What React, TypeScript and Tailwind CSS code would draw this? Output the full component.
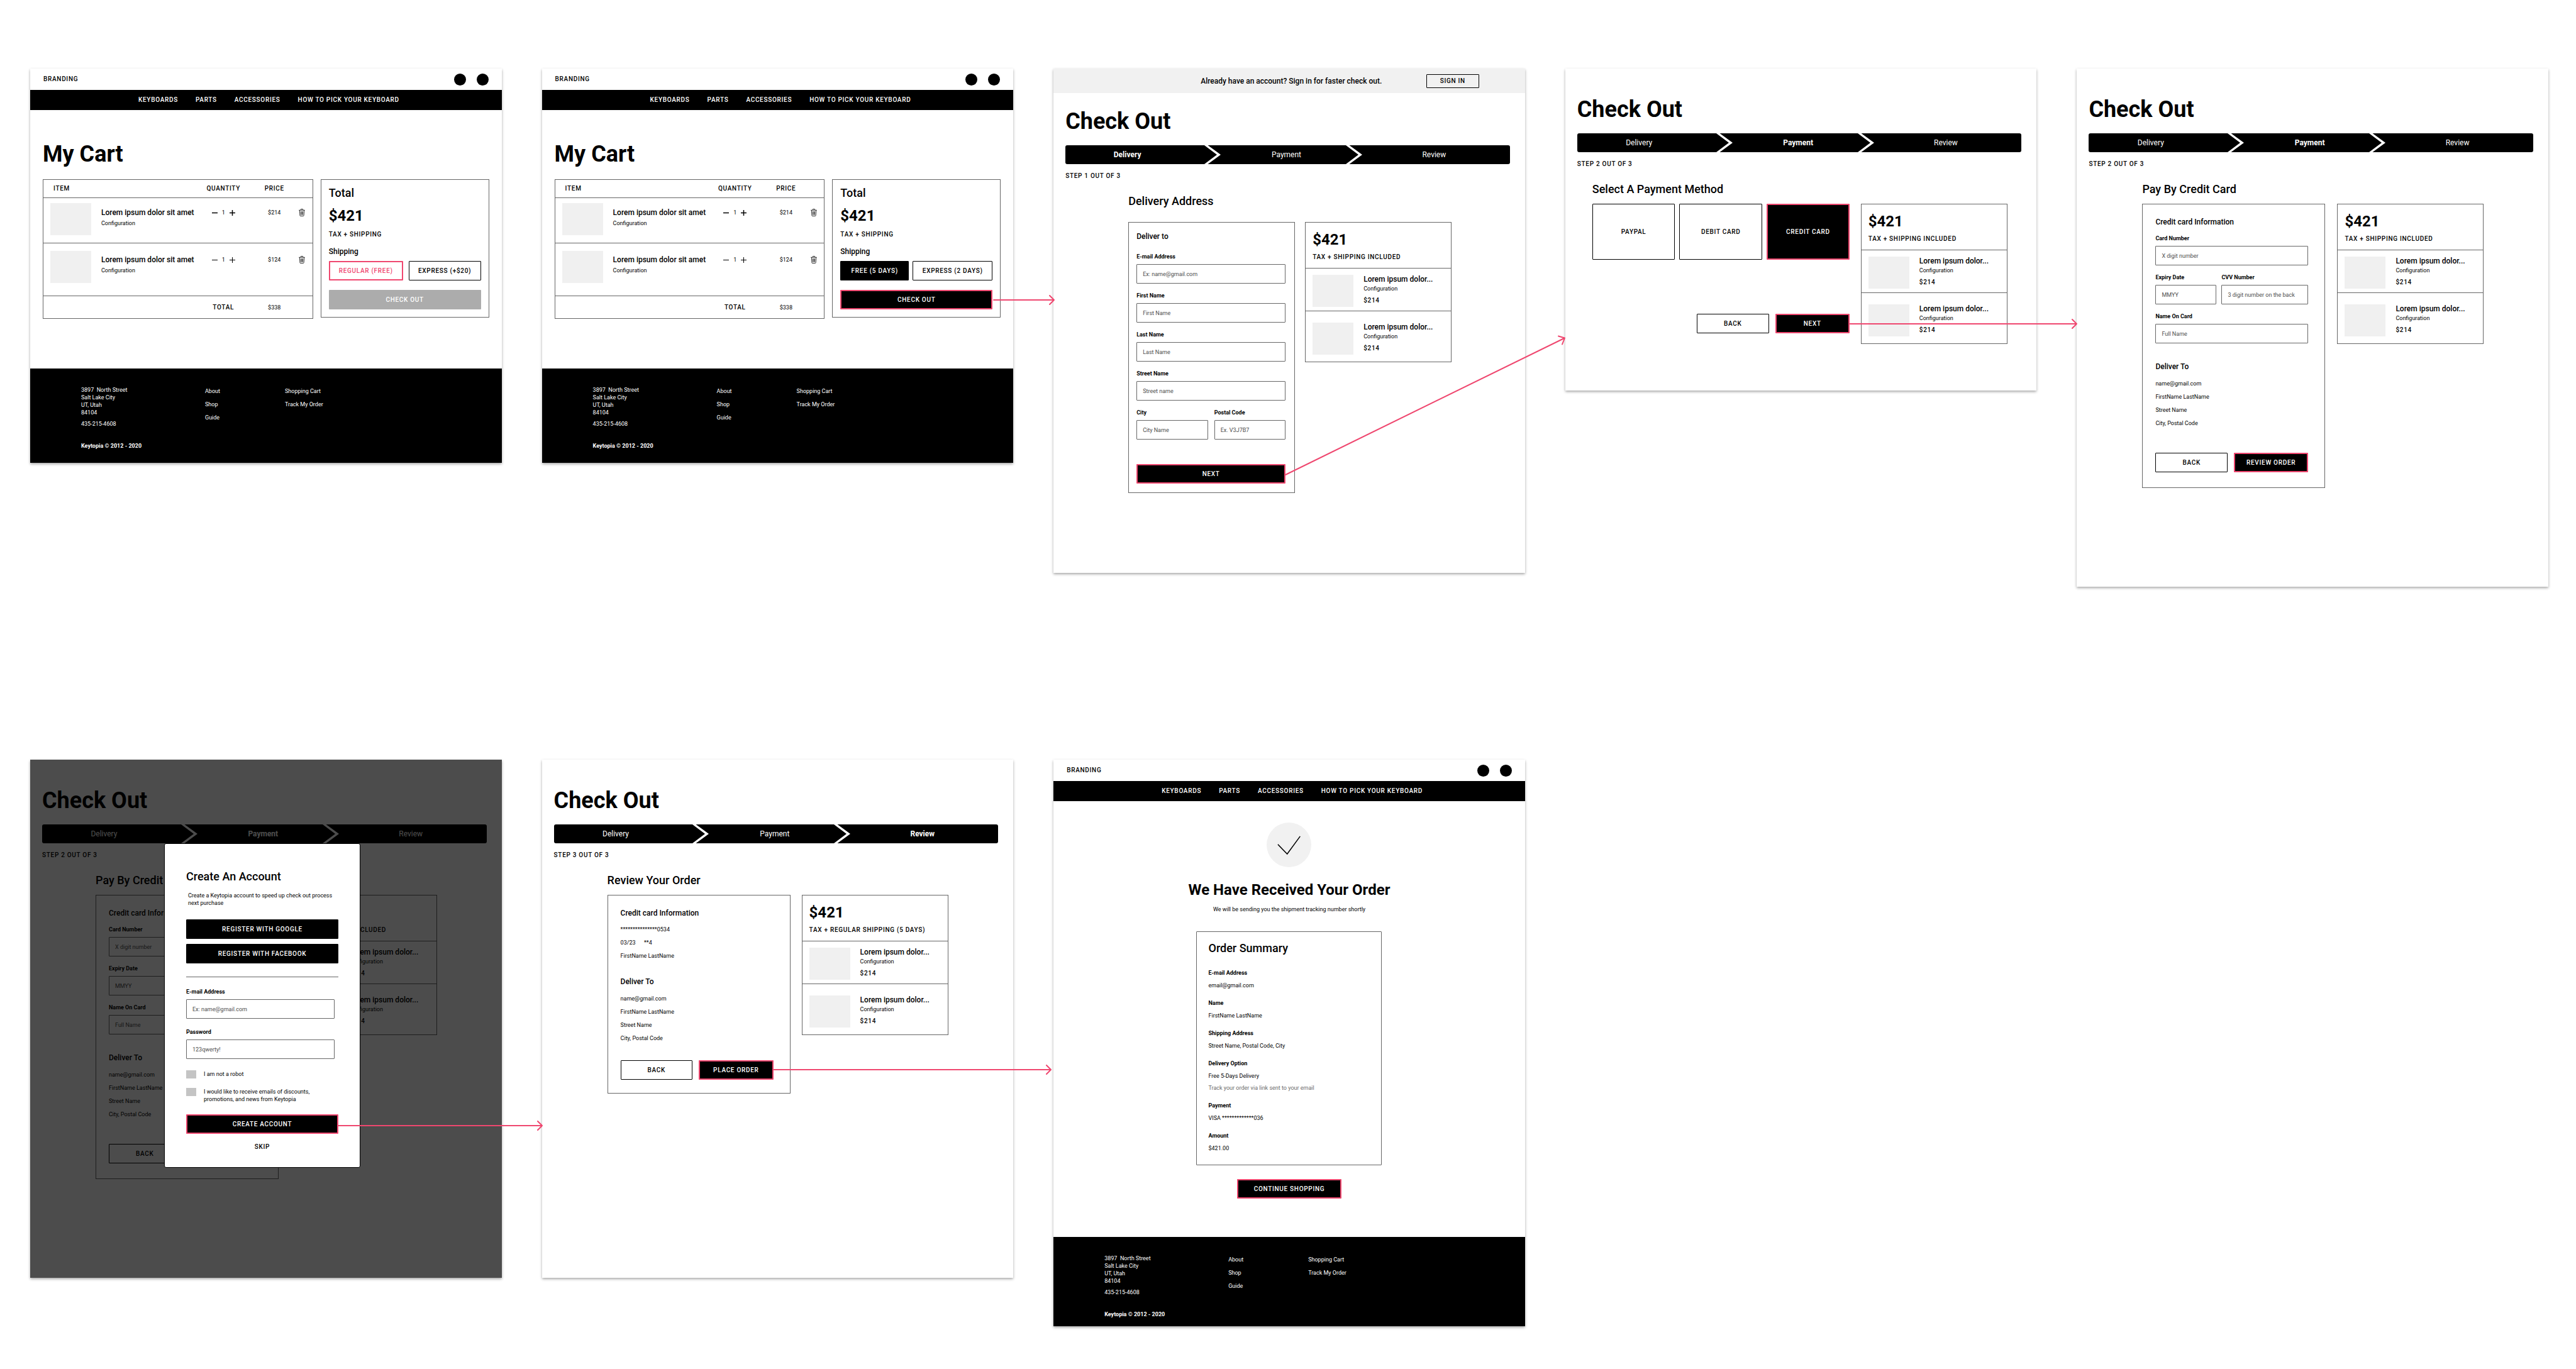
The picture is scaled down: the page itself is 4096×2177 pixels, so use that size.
import React, { useId } from "react";

const caps = "text-[10px] leading-3 font-medium tracking-[0.07em]";

/* ---------- shared pieces ---------- */

type Variant = "outline" | "ghost" | "solid" | "solidPink" | "pink" | "disabled";

const variants: Record<Variant, string> = {
  outline: "border border-black bg-white text-black",
  ghost: "border border-black bg-transparent text-black",
  solid: "border border-black bg-black text-white",
  solidPink: "border-2 border-[#ef476f] bg-black text-white",
  pink: "border-2 border-[#ef476f] bg-white text-[#ef476f]",
  disabled: "bg-[#acacac] text-white",
};

function Btn({
  children,
  variant = "outline",
  size = "h-[31px]",
}: {
  children: React.ReactNode;
  variant?: Variant;
  size?: string;
}) {
  return (
    <button
      type="button"
      disabled={variant === "disabled"}
      className={`flex items-center justify-center rounded-[1px] whitespace-nowrap ${caps} ${variants[variant]} ${size}`}
    >
      {children}
    </button>
  );
}

function Field({
  label,
  placeholder,
  type = "text",
  size = "w-full",
}: {
  label: string;
  placeholder: string;
  type?: string;
  size?: string;
}) {
  const id = useId();
  return (
    <div className={`flex flex-col gap-1.5 ${size}`}>
      <label htmlFor={id} className="text-[9px] leading-3 font-bold">
        {label}
      </label>
      <input
        id={id}
        type={type}
        placeholder={placeholder}
        className="h-[31px] w-full rounded-[1px] border border-[#666] bg-transparent px-[9px] text-[9px] text-black placeholder:text-[#4d4d4d] placeholder:opacity-100"
      />
    </div>
  );
}

function Frame({ children, bottom = "" }: { children: React.ReactNode; bottom?: string }) {
  return (
    <section className={`relative bg-white shadow-[0_2px_4px_rgba(0,0,0,0.35)] ${bottom}`}>
      {children}
    </section>
  );
}

/* ---------- shop header and footer ---------- */

function SiteHeader() {
  return (
    <header>
      <div className="flex h-[34px] items-center justify-between px-[21px]">
        <a href="#" className={caps}>
          BRANDING
        </a>
        <div className="flex gap-[17px]">
          <button type="button" aria-label="Account" className="size-[19px] rounded-full bg-black" />
          <button type="button" aria-label="Cart" className="size-[19px] rounded-full bg-black" />
        </div>
      </div>
      <nav className={`flex h-8 items-center gap-7 bg-black pl-[172px] whitespace-nowrap text-white ${caps}`}>
        <a href="#">KEYBOARDS</a>
        <a href="#">PARTS</a>
        <a href="#">ACCESSORIES</a>
        <a href="#">HOW TO PICK YOUR KEYBOARD</a>
      </nav>
    </header>
  );
}

function SiteFooter({ bottom }: { bottom: string }) {
  return (
    <footer className={`bg-black pt-7 pl-[81px] text-[9px] leading-3 text-white ${bottom}`}>
      <div className="flex">
        <address className="w-[197px] not-italic">
          <p className="whitespace-pre">3897{"  "}North Street</p>
          <p>Salt Lake City</p>
          <p>UT, Utah</p>
          <p>84104</p>
          <p className="mt-1.5">435-215-4608</p>
        </address>
        <div className="flex w-[127px] flex-col items-start gap-[9px] pt-0.5">
          <a href="#">About</a>
          <a href="#">Shop</a>
          <a href="#">Guide</a>
        </div>
        <div className="flex flex-col items-start gap-[9px] pt-0.5">
          <a href="#">Shopping Cart</a>
          <a href="#">Track My Order</a>
        </div>
      </div>
      <p className="mt-[23px] font-bold">Keytopia © 2012 - 2020</p>
    </footer>
  );
}

/* ---------- cart ---------- */

function Trash() {
  return (
    <svg width="10" height="12" viewBox="0 0 20 24" fill="none" stroke="black" strokeWidth="1.6" aria-hidden="true">
      <path d="M0.5 4.5h19M6.5 4V2.2Q6.5 1 7.7 1h4.6q1.2 0 1.2 1.2V4M2.6 4.5l1.2 16.8q.1 1.7 1.8 1.7h8.8q1.7 0 1.8-1.7l1.2-16.8M6.8 8l.4 11.5M10 8v11.5M13.2 8l-.4 11.5" />
    </svg>
  );
}

function Quantity({ stroke }: { stroke: number }) {
  return (
    <div className="flex items-center justify-center gap-[7px]">
      <button type="button" aria-label="Decrease quantity">
        <svg width="9" height="9" viewBox="0 0 9 9" stroke="black" strokeWidth={stroke} aria-hidden="true">
          <path d="M0 4.5h9" />
        </svg>
      </button>
      <span>1</span>
      <button type="button" aria-label="Increase quantity">
        <svg width="9" height="9" viewBox="0 0 9 9" stroke="black" strokeWidth={stroke} aria-hidden="true">
          <path d="M0 4.5h9M4.5 0v9" />
        </svg>
      </button>
    </div>
  );
}

const cartRows = [
  { price: "$214", height: "h-[72px]", image: "pt-2", text: "pt-4", cell: "pt-[17px]", stroke: 1.5 },
  { price: "$124", height: "h-[84px]", image: "pt-3", text: "pt-[19px]", cell: "pt-5", stroke: 1 },
];

function CartTable() {
  return (
    <table className="h-[221px] w-full table-fixed border-collapse border border-[#666] text-[9px] leading-3">
      <colgroup>
        <col />
        <col className="w-[92px]" />
        <col className="w-[70px]" />
        <col className="w-[26px]" />
      </colgroup>
      <thead>
        <tr className={`h-[29px] border-b border-[#666] ${caps}`}>
          <th className="pl-4 text-left font-medium">ITEM</th>
          <th className="font-medium">QUANTITY</th>
          <th className="font-medium">PRICE</th>
          <th aria-label="Remove" />
        </tr>
      </thead>
      <tbody>
        {cartRows.map((row) => (
          <tr key={row.price} className={`border-b border-[#666] align-top ${row.height}`}>
            <td>
              <div className="flex gap-4 pl-[11px]">
                <div className={row.image}>
                  <div className="h-[51px] w-[65px] bg-[#f0f0f0]" />
                </div>
                <div className={row.text}>
                  <p className="text-[12px] leading-[14px] font-medium whitespace-nowrap">
                    Lorem ipsum dolor sit amet
                  </p>
                  <p className="mt-1">Configuration</p>
                </div>
              </div>
            </td>
            <td className={row.cell}>
              <Quantity stroke={row.stroke} />
            </td>
            <td className={`text-center ${row.cell}`}>{row.price}</td>
            <td className={`pl-1 ${row.cell}`}>
              <button type="button" aria-label="Remove item" className="block">
                <Trash />
              </button>
            </td>
          </tr>
        ))}
      </tbody>
      <tfoot>
        <tr className="h-9">
          <td />
          <td className={`text-center ${caps}`}>TOTAL</td>
          <td className="text-center">$338</td>
          <td />
        </tr>
      </tfoot>
    </table>
  );
}

function Cart({ ready = false }: { ready?: boolean }) {
  return (
    <Frame>
      <SiteHeader />
      <main className="px-5 pt-[50px] pb-[79px]">
        <h1 className="text-[36px] leading-10 font-bold">My Cart</h1>
        <div className="mt-5 grid grid-cols-[430fr_268fr] items-start gap-3">
          <CartTable />
          <div className="border border-[#666] p-3">
            <h2 className="text-[18px] leading-[18px] font-medium">Total</h2>
            <p className="mt-[15px] text-[24px] leading-6 font-bold">$421</p>
            <p className={`mt-3 ${caps}`}>TAX + SHIPPING</p>
            <h3 className="mt-[13px] text-[12px] leading-4 font-medium">Shipping</h3>
            {ready ? (
              <div className="mt-[7px] grid grid-cols-[109fr_127fr] gap-1.5">
                <Btn variant="solid">FREE (5 DAYS)</Btn>
                <Btn>EXPRESS (2 DAYS)</Btn>
              </div>
            ) : (
              <div className="mt-[7px] grid grid-cols-[118fr_115fr] gap-[9px]">
                <Btn variant="pink">REGULAR (FREE)</Btn>
                <Btn>EXPRESS (+$20)</Btn>
              </div>
            )}
            <div className="mt-[15px]">
              <Btn variant={ready ? "solidPink" : "disabled"} size="h-[31px] w-full">CHECK OUT</Btn>
            </div>
          </div>
        </div>
      </main>
      <SiteFooter bottom="pb-[21px]" />
    </Frame>
  );
}

/* ---------- check out ---------- */

function Chevron() {
  return (
    <svg width="26" height="30" viewBox="0 0 26 30" fill="white" aria-hidden="true">
      <path d="M0 0h5.5L26 15 5.5 30H0L20 15z" />
    </svg>
  );
}

function Steps({ current }: { current: number }) {
  const weight = (n: number) => (n === current ? "font-bold" : "font-normal");
  return (
    <div className="mt-[18px] mr-6 ml-[19px] grid h-[30px] grid-cols-[221fr_26px_199fr_26px_235fr] items-center overflow-hidden rounded-[3px] bg-black text-center text-[12px] leading-4 text-white">
      <span className={`pr-6 ${weight(1)}`}>Delivery</span>
      <Chevron />
      <span className={`pl-2.5 ${weight(2)}`}>Payment</span>
      <Chevron />
      <span className={`pr-1.5 ${weight(3)}`}>Review</span>
    </div>
  );
}

function CheckOutHead({ step, current, top }: { step: number; current: number; top: string }) {
  return (
    <>
      <h1 className={`pl-[19px] text-[36px] leading-10 font-bold ${top}`}>Check Out</h1>
      <Steps current={current} />
      <p className={`mt-[13px] pl-[19px] ${caps}`}>STEP {step} OUT OF 3</p>
    </>
  );
}

function OrderPanel({ note = "TAX + SHIPPING INCLUDED" }: { note?: string }) {
  return (
    <aside className="w-[233px] border border-[#666]">
      <div className="px-[11px] pt-[15px] pb-[11px]">
        <p className="text-[24px] leading-6 font-bold">$421</p>
        <p className={`mt-2.5 whitespace-nowrap ${caps}`}>{note}</p>
      </div>
      {["pt-2.5 pb-1.5", "pt-[18px] pb-[11px]"].map((pad) => (
        <div key={pad} className={`flex gap-4 border-t border-[#666] px-[11px] ${pad}`}>
          <div className="h-[51px] w-[65px] bg-[#f0f0f0]" />
          <div>
            <p className="text-[12px] leading-[14px] font-medium">Lorem ipsum dolor...</p>
            <p className="mt-0.5 text-[9px] leading-3">Configuration</p>
            <p className={`mt-[7px] ${caps}`}>$214</p>
          </div>
        </div>
      ))}
    </aside>
  );
}

function Delivery() {
  return (
    <Frame bottom="pb-[127px]">
      <div className="flex h-[39px] items-center bg-[#f1f1f1] pl-[234px]">
        <p className="text-[12px] leading-4 font-medium whitespace-nowrap">
          Already have an account? Sign in for faster check out.
        </p>
        <div className="ml-auto pr-[73px]">
          <Btn variant="ghost" size="h-[22px] w-[84px]">SIGN IN</Btn>
        </div>
      </div>
      <CheckOutHead step={1} current={1} top="pt-[25px]" />
      <div className="pl-[119px]">
        <h2 className="mt-6 text-[18px] leading-5 font-medium">Delivery Address</h2>
        <div className="mt-[23px] flex items-start gap-4">
          <form className="w-[265px] border border-[#666] pt-3.5 pr-3.5 pb-3.5 pl-3">
            <h3 className="text-[12px] leading-4 font-medium">Deliver to</h3>
            <div className="mt-[18px] flex flex-col gap-[13px]">
              <Field label="E-mail Address" placeholder="Ex: name@gmail.com" />
              <Field label="First Name" placeholder="First Name" />
              <Field label="Last Name" placeholder="Last Name" />
              <Field label="Street Name" placeholder="Street name" />
              <div className="flex gap-2.5">
                <Field label="City" placeholder="City Name" />
                <Field label="Postal Code" placeholder="Ex. V3J7B7" />
              </div>
            </div>
            <div className="mt-[39px]">
              <Btn variant="solidPink" size="h-[31px] w-full">NEXT</Btn>
            </div>
          </form>
          <OrderPanel />
        </div>
      </div>
    </Frame>
  );
}

function PaymentMethod() {
  return (
    <Frame bottom="pb-[74px]">
      <CheckOutHead step={2} current={2} top="pt-[45px]" />
      <div className="pl-[43px]">
        <h2 className="mt-6 text-[18px] leading-5 font-medium">Select A Payment Method</h2>
        <div className="mt-[13px] flex items-start gap-[18px]">
          <div className="w-[409px]">
            <div className="grid grid-cols-3 gap-[7px]">
              <Btn size="h-[89px]">PAYPAL</Btn>
              <Btn size="h-[89px]">DEBIT CARD</Btn>
              <Btn variant="solidPink" size="h-[89px]">CREDIT CARD</Btn>
            </div>
            <div className="mt-[86px] flex justify-end gap-2.5">
              <Btn size="h-[31px] w-[115px]">BACK</Btn>
              <Btn variant="solidPink" size="h-[31px] w-[118px]">NEXT</Btn>
            </div>
          </div>
          <OrderPanel />
        </div>
      </div>
    </Frame>
  );
}

const address = ["name@gmail.com", "FirstName LastName", "Street Name", "City, Postal Code"];

function Lines({ items, gap }: { items: string[]; gap: string }) {
  return (
    <div className={`flex flex-col gap-[9px] text-[9px] leading-3 whitespace-pre ${gap}`}>
      {items.map((line) => (
        <p key={line}>{line}</p>
      ))}
    </div>
  );
}

function CreditCard({ children }: { children?: React.ReactNode }) {
  return (
    <Frame bottom="pb-[157px]">
      <CheckOutHead step={2} current={2} top="pt-[45px]" />
      <div className="pl-[104px]">
        <h2 className="mt-6 text-[18px] leading-5 font-medium">Pay By Credit Card</h2>
        <div className="mt-[13px] flex items-start gap-[19px]">
          <form className="w-[291px] border border-[#666] pt-5 pr-[26px] pb-6 pl-5">
            <h3 className="text-[12px] leading-4 font-medium">Credit card Information</h3>
            <div className="mt-3 flex flex-col gap-[13px]">
              <Field label="Card Number" placeholder="X digit number" />
              <div className="grid grid-cols-[97fr_138fr] gap-2">
                <Field label="Expiry Date" placeholder="MMYY" />
                <Field label="CVV Number" placeholder="3 digit number on the back" />
              </div>
              <Field label="Name On Card" placeholder="Full Name" />
            </div>
            <h3 className="mt-[29px] text-[12px] leading-4 font-medium">Deliver To</h3>
            <Lines items={address} gap="mt-[13px]" />
            <div className="mt-[41px] grid grid-cols-[115fr_119fr] gap-2.5">
              <Btn>BACK</Btn>
              <Btn variant="solidPink">REVIEW ORDER</Btn>
            </div>
          </form>
          <OrderPanel />
        </div>
      </div>
      {children}
    </Frame>
  );
}

function Check({ children }: { children: React.ReactNode }) {
  return (
    <label className="flex items-start gap-3 text-[9px] leading-3">
      <input type="checkbox" className="h-[13px] w-4 shrink-0 appearance-none bg-[#c4c4c4]" />
      <span>{children}</span>
    </label>
  );
}

function AccountDialog() {
  return (
    <div className="absolute inset-0 bg-black/70">
      <div
        role="dialog"
        aria-label="Create An Account"
        className="absolute top-[133px] left-[213px] w-[312px] rounded-[3px] border border-black bg-white px-[34px] pt-[42px] pb-[26px]"
      >
        <h2 className="text-[18px] leading-5 font-medium">Create An Account</h2>
        <p className="mt-3.5 px-[3px] text-[9px] leading-3">
          Create a Keytopia account to speed up check out process next purchase
        </p>
        <div className="mt-5 flex flex-col gap-2">
          <Btn variant="solid">REGISTER WITH GOOGLE</Btn>
          <Btn variant="solid">REGISTER WITH FACEBOOK</Btn>
        </div>
        <hr className="mt-[21px] border-[#666]" />
        <div className="mt-[17px] mr-1.5 flex flex-col gap-[15px]">
          <Field label="E-mail Address" placeholder="Ex: name@gmail.com" type="email" />
          <Field label="Password" placeholder="123qwerty!" type="password" />
        </div>
        <div className="mt-[18px] flex flex-col gap-[15px]">
          <Check>I am not a robot</Check>
          <Check>
            I would like to receive emails of discounts,
            <br />
            promotions, and news from Keytopia
          </Check>
        </div>
        <div className="mt-[18px] flex flex-col items-center gap-[15px]">
          <Btn variant="solidPink" size="h-[31px] w-full">CREATE ACCOUNT</Btn>
          <button type="button" className={caps}>
            SKIP
          </button>
        </div>
      </div>
    </div>
  );
}

function Review() {
  return (
    <Frame bottom="pb-[293px]">
      <CheckOutHead step={3} current={3} top="pt-[45px]" />
      <div className="pl-[104px]">
        <h2 className="mt-6 text-[18px] leading-5 font-medium">Review Your Order</h2>
        <div className="mt-[13px] flex items-start gap-[18px]">
          <div className="w-[291px] border border-[#666] pt-5 pr-[26px] pb-[21px] pl-5">
            <h3 className="text-[12px] leading-4 font-medium">Credit card Information</h3>
            <Lines items={["***************0534", "03/23      **4", "FirstName LastName"]} gap="mt-3" />
            <h3 className="mt-[27px] text-[12px] leading-4 font-medium">Deliver To</h3>
            <Lines items={address} gap="mt-[13px]" />
            <div className="mt-[29px] grid grid-cols-[115fr_119fr] gap-2.5">
              <Btn>BACK</Btn>
              <Btn variant="solidPink">PLACE ORDER</Btn>
            </div>
          </div>
          <OrderPanel note="TAX + REGULAR SHIPPING (5 DAYS)" />
        </div>
      </div>
    </Frame>
  );
}

/* ---------- confirmation ---------- */

const summary: { label: string; value: string; hint?: string }[] = [
  { label: "E-mail Address", value: "email@gmail.com" },
  { label: "Name", value: "FirstName LastName" },
  { label: "Shipping Address", value: "Street Name, Postal Code, City" },
  { label: "Delivery Option", value: "Free 5-Days Delivery", hint: "Track your order via link sent to your email" },
  { label: "Payment", value: "VISA *************036" },
  { label: "Amount", value: "$421.00" },
];

function Confirmation() {
  return (
    <Frame>
      <SiteHeader />
      <main className="flex flex-col items-center pt-[34px] pb-[61px]">
        <svg width="71" height="71" viewBox="0 0 71 71" fill="none" aria-hidden="true">
          <circle cx="35.5" cy="35.5" r="35.5" fill="#f1f1f1" />
          <path d="M17.9 34.7 32.7 50 53.3 21.9" stroke="black" strokeWidth="1.5" />
        </svg>
        <h1 className="mt-[22px] text-[24px] leading-7 font-bold">We Have Received Your Order</h1>
        <p className="mt-[11px] text-[9px] leading-3">
          We will be sending you the shipment tracking number shortly
        </p>
        <div className="mt-[29px] w-[295px] rounded-[1px] border border-[#666] px-[18px] pt-4 pb-5">
          <h2 className="text-[18px] leading-5 font-medium">Order Summary</h2>
          <dl className="mt-[23px] flex flex-col gap-4 text-[9px] leading-3">
            {summary.map((row) => (
              <div key={row.label}>
                <dt className="font-bold">{row.label}</dt>
                <dd className="mt-2">{row.value}</dd>
                {row.hint && <dd className="mt-[7px] text-[#6b6b6b]">{row.hint}</dd>}
              </div>
            ))}
          </dl>
        </div>
        <div className="mt-[22px]">
          <Btn variant="solidPink" size="h-[31px] w-[166px]">CONTINUE SHOPPING</Btn>
        </div>
      </main>
      <SiteFooter bottom="pb-[13px]" />
    </Frame>
  );
}

/* ---------- flow arrows between the screens ---------- */

function Arrows() {
  return (
    <svg
      viewBox="0 0 4096 2177"
      className="pointer-events-none absolute top-0 left-0 w-full"
      fill="none"
      stroke="#ef476f"
      strokeWidth="2"
      strokeLinecap="round"
      strokeLinejoin="round"
      aria-hidden="true"
    >
      <path d="M1580 477H1676M1669 470l7 7-7 7" />
      <path d="M2044 755L2488 537.5M2478 534.5l10 3-4 10" />
      <path d="M2941 515H3302M3295 508l7 7-7 7" />
      <path d="M538 1790H862M855 1783l7 7-7 7" />
      <path d="M1230 1701H1671M1664 1694l7 7-7 7" />
    </svg>
  );
}

export default function App() {
  return (
    <div className="relative min-h-screen bg-white font-[Roboto,sans-serif] text-black">
      <div className="grid grid-cols-5 items-start gap-x-16 gap-y-[275px] pt-[109px] pr-11 pb-[68px] pl-12">
        <Cart />
        <Cart ready />
        <Delivery />
        <PaymentMethod />
        <CreditCard />
        <CreditCard>
          <AccountDialog />
        </CreditCard>
        <Review />
        <Confirmation />
      </div>
      <Arrows />
    </div>
  );
}
